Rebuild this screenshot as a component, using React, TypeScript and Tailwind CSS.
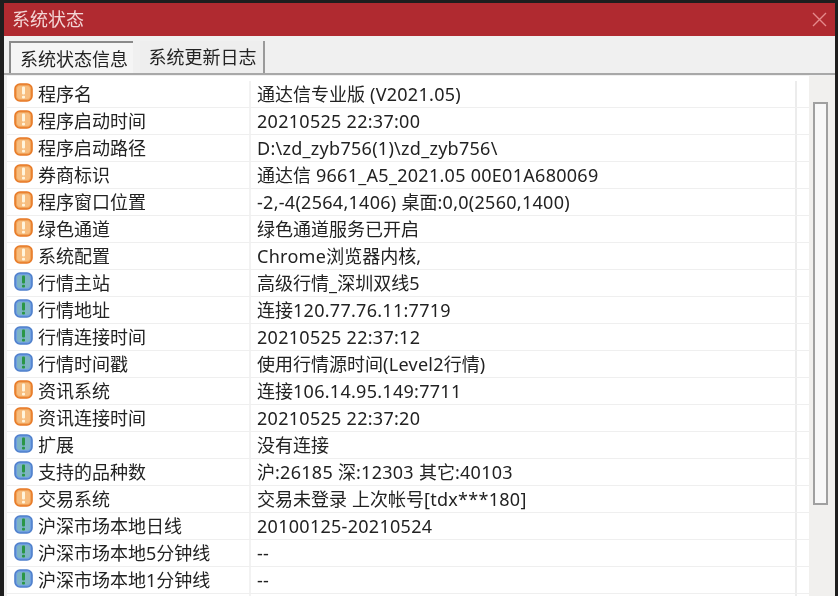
const FONT = "font-['Noto_Sans','Noto_Sans_CJK_SC',sans-serif]";

type Row = [string, string, "o" | "b"];

const rows: Row[] = [
  ["程序名", "通达信专业版 (V2021.05)", "o"],
  ["程序启动时间", "20210525 22:37:00", "o"],
  ["程序启动路径", "D:\\zd_zyb756(1)\\zd_zyb756\\", "o"],
  ["券商标识", "通达信 9661_A5_2021.05 00E01A680069", "o"],
  ["程序窗口位置", "-2,-4(2564,1406) 桌面:0,0(2560,1400)", "o"],
  ["绿色通道", "绿色通道服务已开启", "o"],
  ["系统配置", "Chrome浏览器内核,", "o"],
  ["行情主站", "高级行情_深圳双线5", "b"],
  ["行情地址", "连接120.77.76.11:7719", "b"],
  ["行情连接时间", "20210525 22:37:12", "b"],
  ["行情时间戳", "使用行情源时间(Level2行情)", "b"],
  ["资讯系统", "连接106.14.95.149:7711", "o"],
  ["资讯连接时间", "20210525 22:37:20", "o"],
  ["扩展", "没有连接", "b"],
  ["支持的品种数", "沪:26185 深:12303 其它:40103", "b"],
  ["交易系统", "交易未登录 上次帐号[tdx***180]", "o"],
  ["沪深市场本地日线", "20100125-20210524", "b"],
  ["沪深市场本地5分钟线", "--", "b"],
  ["沪深市场本地1分钟线", "--", "b"],
  ["", "", "b"],
];

function Value({ text }: { text: string }) {
  const parts = text.split(/([\x20-\x7e]+)/).filter(Boolean);
  return (
    <span>
      {parts.map((p, i) =>
        /^[\x20-\x7e]+$/.test(p) ? (
          <span key={i} className="tracking-[0.28px]">{p}</span>
        ) : (
          <span key={i}>{p}</span>
        )
      )}
    </span>
  );
}

function Bang({ kind }: { kind: "o" | "b" }) {
  const orange = kind === "o";
  return (
    <svg width="19" height="19" viewBox="0 0 19 19" className="shrink-0 -mt-[3px]">
      <rect x="1" y="1" width="17" height="17" rx="5" fill={orange ? "#f0a35a" : "#6f9fe0"} stroke={orange ? "#e87a26" : "#4f80cc"} strokeWidth="1.6" />
      <rect x="3" y="3" width="13" height="13" rx="3" fill={orange ? "#f7bd7e" : "#7db4c4"} />
      <rect x="8" y="3.5" width="3" height="8" rx="1" fill={orange ? "#fff4dc" : "#2a9646"} />
      <rect x="8" y="12.8" width="3" height="2.8" rx="1" fill={orange ? "#fff4dc" : "#2a9646"} />
    </svg>
  );
}

export default function App() {
  return (
    <div className={`w-[838px] h-[596px] overflow-hidden bg-[#1e1e1e] pt-[3px] pl-[4px] pr-[3px] ${FONT} blur-[0.5px]`}>
      <div className="h-full flex flex-col bg-[#f0f0f0]">
        <div className="h-[33px] shrink-0 bg-[#b02a30] flex items-center justify-between pl-[8px] pr-[8px]">
          <span className="text-[18px] text-[#f3d6d6]">系统状态</span>
          <svg width="15" height="15" viewBox="0 0 15 15">
            <path d="M1 1L14 14M14 1L1 14" stroke="#e58a8c" strokeWidth="1.4" fill="none" />
          </svg>
        </div>
        <div className="h-[39px] shrink-0 flex items-end pl-[5px] gap-[7px] border-b-2 border-[#a8a8a8]">
          <div className="h-[32px] w-[124px] flex items-center justify-center pl-[4px] pt-[3px] text-[18px] text-[#222] bg-[#f5f5f5] border-t-2 border-l-2 border-[#8a8a8a]">
            系统状态信息
          </div>
          <div className="h-[32px] w-[125px] flex items-center justify-center pl-[2px] pt-[1px] text-[18px] text-[#222] bg-[#eeeeee] border-r-2 border-[#9a9a9a]">
            系统更新日志
          </div>
        </div>
        <div className="flex-1 min-h-0 flex mt-[1px] ml-[3px]">
          <div className="w-[802px] shrink-0 pt-[5px] bg-white overflow-hidden">
            {rows.map((r, i) => (
              <div key={i} className="h-[27px] flex items-center border-b border-[#efefef] text-[18px] text-[#222]">
                <div className="w-[244px] shrink-0 h-full flex items-center pl-[7px] gap-[5px] border-r-2 border-[#f2f2f2] whitespace-nowrap">
                  <Bang kind={r[2]} />
                  <span>{r[0]}</span>
                </div>
                <div className="w-[546px] shrink-0 h-full flex items-center pl-[6px] border-r-2 border-[#ececec] whitespace-pre">
                  <Value text={r[1]} />
                </div>
              </div>
            ))}
          </div>
          <div className="flex-1 bg-[#f1f0ee] pt-[26px] pl-[4px]">
            <div className="w-[15px] h-[403px] border-2 border-[#a0a0a0] bg-[#f8f8f8]" />
          </div>
        </div>
      </div>
    </div>
  );
}
